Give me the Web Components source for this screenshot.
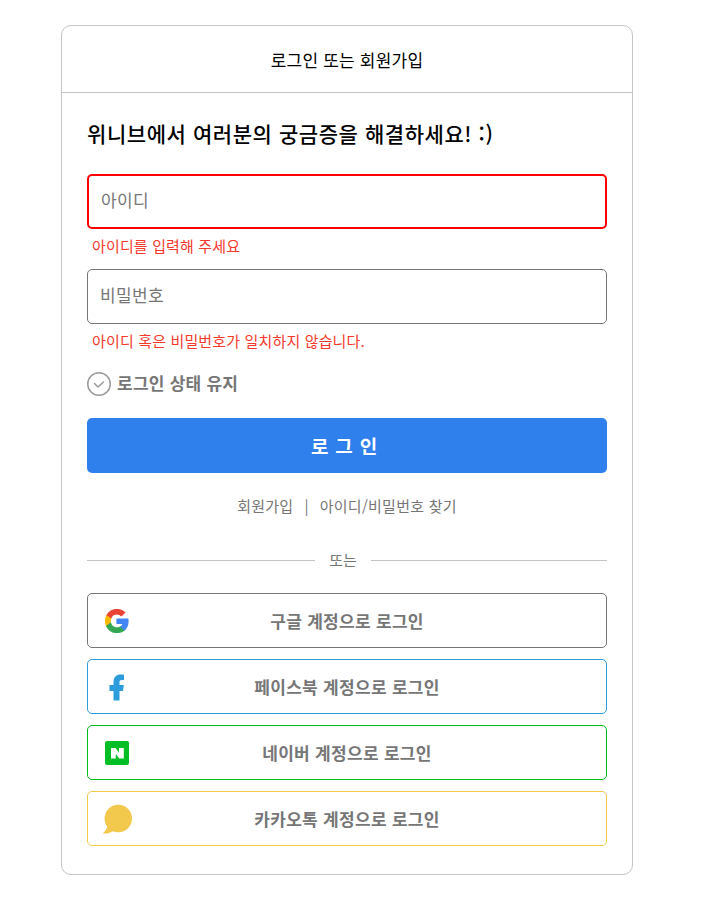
<!DOCTYPE html>
<html lang="ko"><head><meta charset="utf-8"><title>로그인</title>
<style>
html,body{margin:0;padding:0;background:#fff;font-family:"Noto Sans CJK KR","Noto Sans",sans-serif;}
body{padding:25px 0 0 61px;height:899px;box-sizing:border-box;overflow:hidden}
</style></head><body>
<login-card>
<span slot="title">로그인 또는 회원가입</span>
<login-heading>위니브에서 여러분의 궁금증을 해결하세요! :)</login-heading>
<text-field invalid style="margin-top:25px">아이디</text-field>
<field-error style="margin-top:7px">아이디를 입력해 주세요</field-error>
<text-field style="margin-top:13px">비밀번호</text-field>
<field-error style="margin-top:7px">아이디 혹은 비밀번호가 일치하지 않습니다.</field-error>
<keep-login style="margin-top:21px">로그인 상태 유지</keep-login>
<primary-button style="margin-top:22px">로 그 인</primary-button>
<link-row style="margin-top:21px"></link-row>
<or-divider style="margin-top:34px">또는</or-divider>
<social-button kind="google" style="margin-top:23px">구글 계정으로 로그인</social-button>
<social-button kind="facebook" style="margin-top:11px">페이스북 계정으로 로그인</social-button>
<social-button kind="naver" style="margin-top:11px">네이버 계정으로 로그인</social-button>
<social-button kind="kakao" style="margin-top:11px">카카오톡 계정으로 로그인</social-button>
</login-card>
<script>
function def(name, css, html){
  customElements.define(name, class extends HTMLElement{
    constructor(){super();const r=this.attachShadow({mode:'open'});
      r.innerHTML='<style>'+css+'</style>'+(typeof html==='function'?html(this):html);}
  });
}
def('login-card',`
:host{display:block;width:572px;height:850px;box-sizing:border-box;border:1px solid #c4c4c4;border-radius:10px;background:#fff}
header{height:66px;display:flex;align-items:center;justify-content:center;border-bottom:1px solid #c4c4c4;font-size:17px;letter-spacing:.2px;color:#000}
main{padding:24px 25px 0}
`,`<header><slot name="title"></slot></header><main><slot></slot></main>`);
def('login-heading',`:host{display:block;font-size:21px;letter-spacing:.57px;font-weight:500;line-height:32px;height:32px;color:#000}`,`<slot></slot>`);
def('text-field',`
:host{display:flex;align-items:center;box-sizing:border-box;height:55px;border:1px solid #767676;border-radius:5px;padding:0 12px 5px;font-size:17px;letter-spacing:.4px;color:#767676;background:#fff}
:host([invalid]){border:2px solid #f00;padding:0 11px 5px 12px}
`,`<slot></slot>`);
def('field-error',`:host{display:block;font-size:15px;letter-spacing:.15px;line-height:20px;height:20px;color:#f5392b;padding-left:5px}`,`<slot></slot>`);
def('keep-login',`
:host{display:flex;align-items:center;gap:6px;height:24px;font-size:17px;letter-spacing:.25px;font-weight:700;color:#767676}
svg{display:block;flex:none}
slot{display:block;padding-bottom:3px}
`,`<svg width="24" height="24" viewBox="0 0 24 24" fill="none"><circle cx="12" cy="12" r="11.250" stroke="#9a9a9a" stroke-width="1.500"/><path d="M7.500 11.500 11 15l5.500-5" stroke="#9a9a9a" stroke-width="1.500" stroke-linecap="round" stroke-linejoin="round"/></svg><slot></slot>`);
def('primary-button',`
:host{display:flex;align-items:center;justify-content:center;height:55px;background:#2f80ed;border-radius:5px;color:#fff;font-size:19px;letter-spacing:.8px;font-weight:700;padding-right:5px;box-sizing:border-box}
`,`<slot></slot>`);
def('link-row',`
:host{display:flex;justify-content:center;align-items:center;height:22px;font-size:15px;letter-spacing:.25px;color:#767676}
i{font-style:normal;margin:0 11px;color:#767676}
`,`<span>회원가입</span><i>|</i><span>아이디/비밀번호 찾기</span>`);
def('or-divider',`
:host{display:flex;align-items:center;height:20px;font-size:15px;color:#767676;gap:14px}
:host::before,:host::after{content:"";height:1px;background:#c4c4c4}
:host::before{flex:228 1 0}
:host::after{flex:236 1 0}
slot{display:block;padding-bottom:2px}
`,`<slot></slot>`);
const gs='stroke-width="2.4"';
const icons={
google:`<svg width="24" height="24" viewBox="-1 -1 50 50"><path fill="#EA4335" stroke="#EA4335" ${gs} d="M24 9.500c3.540 0 6.710 1.220 9.210 3.600l6.850-6.850C35.900 2.380 30.470 0 24 0 14.620 0 6.510 5.380 2.560 13.220l7.980 6.190C12.430 13.720 17.740 9.500 24 9.500z"/><path fill="#FBBC05" stroke="#FBBC05" ${gs} d="M10.530 28.590c-.48-1.450-.76-2.990-.76-4.590s.27-3.140.76-4.590l-7.980-6.190C.92 16.460 0 20.120 0 24c0 3.880.92 7.540 2.560 10.780l7.970-6.190z"/><path fill="#34A853" stroke="#34A853" ${gs} d="M24 48c6.480 0 11.930-2.130 15.890-5.810l-7.730-6c-2.150 1.450-4.920 2.300-8.160 2.300-6.260 0-11.570-4.220-13.470-9.910l-7.980 6.190C6.510 42.620 14.620 48 24 48z"/><path fill="#4285F4" stroke="#4285F4" ${gs} d="M46.980 24.550c0-1.570-.15-3.090-.38-4.550H24v9.020h12.940c-.58 2.960-2.260 5.480-4.780 7.180l7.730 6c4.510-4.180 7.090-10.360 7.090-17.650z"/></svg>`,
facebook:`<svg width="24" height="28" viewBox="0 0 24 28"><path fill="#2d9cdb" d="M8.500 27.500V18H4.500V12H8.500V9C8.500 4 11.500 1.500 15.500 1.500C16.800 1.500 18 1.600 19 1.800V7H16.800C15 7 14.500 7.800 14.500 9.300V12H18.800L18 18H14.500V27.500Z"/></svg>`,
naver:`<svg width="24" height="24" viewBox="0 0 24 24"><rect width="24" height="24" rx="2" fill="#03bf25"/><path fill="#fff" d="M6 7h4.600l3.400 4.800V7h4.800v10.500h-4.600l-3.400-4.800v4.800H6z"/></svg>`,
kakao:`<svg width="32" height="32" viewBox="0 0 32 32"><path fill="#f2c94c" d="M17.300 1.800A13.700 13.700 0 1 1 17.300 29.200C15.500 29.200 13.500 28.800 12 28.200C9 30 5.500 30.800 1.500 30.500C3.500 29 5.500 26.500 6.200 23.800C4.500 21.500 3.600 18.600 3.600 15.500A13.700 13.700 0 0 1 17.300 1.800Z"/></svg>`};
const colors={google:'#767676',facebook:'#2d9cdb',naver:'#00bf18',kakao:'#f2c94c'};
def('social-button',`
:host{display:flex;position:relative;align-items:center;justify-content:center;box-sizing:border-box;height:55px;border:1px solid var(--c);border-radius:5px;font-size:17px;letter-spacing:.3px;font-weight:700;color:#767676;background:#fff}
.ic{position:absolute;left:0;top:0;bottom:0;width:58px;display:flex;align-items:center;justify-content:center}
`,el=>{el.style.setProperty('--c',colors[el.getAttribute('kind')]);return `<span class="ic">${icons[el.getAttribute('kind')]}</span><slot></slot>`;});
</script>
</body></html>
